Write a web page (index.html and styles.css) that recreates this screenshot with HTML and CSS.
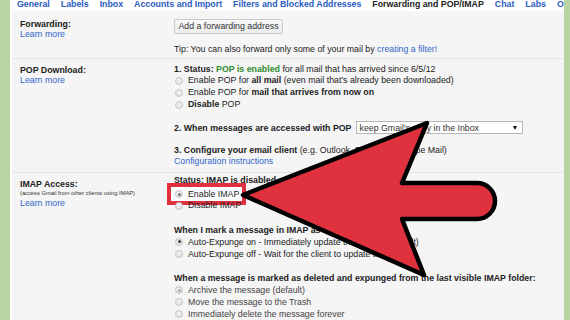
FILE: index.html
```html
<!DOCTYPE html>
<html>
<head>
<meta charset="utf-8">
<link rel="stylesheet" href="styles.css">
</head>
<body>
<div class="frame">
  <div class="strip"></div>
  <div class="page">
    <nav class="tabs">
      <a class="tab">General</a>
      <a class="tab">Labels</a>
      <a class="tab">Inbox</a>
      <a class="tab">Accounts and Import</a>
      <a class="tab">Filters and Blocked Addresses</a>
      <a class="tab active">Forwarding and POP/IMAP</a>
      <a class="tab">Chat</a>
      <a class="tab">Labs</a>
      <a class="tab">Offline</a>
    </nav>
    <div class="content">
      <section class="row fwd">
        <div class="label"><b>Forwarding:</b><a class="link">Learn more</a></div>
        <div class="body">
          <div class="btn">Add a forwarding address</div>
          <div class="tip">Tip: You can also forward only some of your mail by <a class="link">creating a filter!</a></div>
        </div>
      </section>
      <section class="row pop">
        <div class="label"><b>POP Download:</b><a class="link">Learn more</a></div>
        <div class="body">
          <div class="line"><b>1. Status: <span class="green">POP is enabled</span></b> for all mail that has arrived since 6/5/12</div>
          <div class="line opt"><span class="radio"></span><span>Enable POP for <b>all mail</b> (even mail that's already been downloaded)</span></div>
          <div class="line opt"><span class="radio"></span><span>Enable POP for <b>mail that arrives from now on</b></span></div>
          <div class="line opt"><span class="radio"></span><span><b>Disable</b> POP</span></div>
          <div class="selrow"><b>2. When messages are accessed with POP</b><div class="select"><span>keep Gmail's copy in the Inbox</span><span class="caret"></span></div></div>
          <div class="line cfg"><b>3. Configure your email client</b> (e.g. Outlook, Eudora, Netscape Mail)</div>
          <div class="line"><a class="link">Configuration instructions</a></div>
        </div>
      </section>
      <section class="row imap">
        <div class="label"><b>IMAP Access:</b><span class="small">(access Gmail from other clients using IMAP)</span><a class="link">Learn more</a></div>
        <div class="body">
          <div class="line2"><b>Status: IMAP is disabled</b></div>
          <div class="line2 tall"><span class="hl"><span class="radio on"></span><span>Enable IMAP</span></span></div>
          <div class="line2 tall opt"><span class="radio"></span><span>Disable IMAP</span></div>
          <div class="line2 head"><b>When I mark a message in IMAP as deleted:</b></div>
          <div class="line2 opt"><span class="radio on dark"></span><span>Auto-Expunge on - Immediately update the server. (default)</span></div>
          <div class="line2 opt"><span class="radio"></span><span>Auto-Expunge off - Wait for the client to update the server.</span></div>
          <div class="line2 head2"><b>When a message is marked as deleted and expunged from the last visible IMAP folder:</b></div>
          <div class="line2 opt dim"><span class="radio on light"></span><span>Archive the message (default)</span></div>
          <div class="line2 opt dim"><span class="radio"></span><span>Move the message to the Trash</span></div>
          <div class="line2 opt dim"><span class="radio"></span><span>Immediately delete the message forever</span></div>
        </div>
      </section>
    </div>
  </div>
  <div class="strip right"></div>
  <svg class="arrow" width="570" height="320" viewBox="0 0 570 320">
    <path d="M243 195 L427 123 L402 183 L477 183 A18 18 0 0 1 477 219 L402 219 L424 275 Z" fill="#e0313f" stroke="#000" stroke-width="4.5" stroke-linejoin="round"/>
  </svg>
</div>
</body>
</html>
```
FILE: styles.css
```css
html, body {
  margin: 0;
  padding: 0;
  background: #fff;
}
body {
  font-family: "Liberation Sans", Arial, sans-serif;
  font-size: 8.8px;
  color: #222;
}
.frame {
  position: relative;
  width: 570px;
  height: 320px;
  display: flex;
  overflow: hidden;
}
.strip {
  width: 10px;
  background: #b9d4a1;
  flex: none;
}
.strip.right {
  width: 6px;
}
.page {
  flex: 1;
  min-width: 0;
  padding-left: 2px;
  display: flex;
  flex-direction: column;
  background: #fff;
  overflow: hidden;
}
.tabs {
  height: 12px;
  line-height: 9px;
  padding-left: 5px;
  display: flex;
  gap: 11px;
  white-space: nowrap;
  overflow: hidden;
  background: #fff;
}
.tab {
  font-weight: bold;
  color: #2a5bbf;
  flex: none;
}
.tab.active {
  color: #222;
}
.content {
  flex: 1;
  background: #f5f5f5;
}
.row {
  display: grid;
  grid-template-columns: 162px 1fr;
  border-bottom: 1px solid #e4e4e4;
}
.label {
  padding-left: 8px;
  line-height: 10px;
  display: flex;
  flex-direction: column;
  align-items: flex-start;
}
.link {
  color: #3366cc;
}
.fwd {
  padding: 8px 0 3px;
}
.btn {
  width: 109px;
  height: 15px;
  box-sizing: border-box;
  border: 1px solid #c8c8c8;
  border-radius: 2px;
  background: linear-gradient(#f8f8f8, #ececec);
  line-height: 13px;
  text-align: center;
  color: #333;
}
.tip {
  margin-top: 9px;
  line-height: 12px;
}
.pop {
  padding: 5px 0 4px;
}
.pop .label {
  padding-top: 1px;
}
.line {
  line-height: 11.7px;
  white-space: nowrap;
}
.opt {
  display: flex;
  align-items: center;
}
.green {
  color: #2e8b2e;
}
.radio {
  width: 8px;
  height: 8px;
  box-sizing: border-box;
  border-radius: 50%;
  border: 1px solid #c6c6c6;
  background: radial-gradient(circle at 50% 40%, #f4f4f4, #dadada);
  margin: 0 5px 0 1px;
  flex: none;
  display: flex;
  align-items: center;
  justify-content: center;
}
.radio.on::after {
  content: "";
  width: 3px;
  height: 3px;
  border-radius: 50%;
  background: #777;
}
.radio.dark::after {
  background: #444;
}
.radio.light::after {
  background: #aaa;
}
.selrow {
  margin-top: 10px;
  height: 14px;
  display: flex;
  align-items: center;
  white-space: nowrap;
}
.select {
  margin-left: 4px;
  width: 167px;
  height: 13px;
  box-sizing: border-box;
  border: 1px solid #b5b5b5;
  background: #fff;
  display: flex;
  align-items: center;
  justify-content: space-between;
  padding: 0 5px 0 3px;
  color: #333;
}
.caret {
  width: 0;
  height: 0;
  border-left: 2.5px solid transparent;
  border-right: 2.5px solid transparent;
  border-top: 4px solid #111;
}
.cfg {
  margin-top: 10px;
}
.imap {
  padding: 1.5px 0 0;
  border-bottom: none;
}
.imap .label {
  padding-top: 4.5px;
}
.small {
  font-size: 5.75px;
  line-height: 9px;
  white-space: nowrap;
  color: #333;
}
.line2 {
  line-height: 12px;
  height: 12px;
  white-space: nowrap;
}
.line2.tall {
  height: 13px;
  line-height: 13px;
}
.head {
  margin-top: 11.3px;
}
.head2 {
  margin-top: 12.3px;
}
.dim {
  color: #444;
}
.hl {
  display: inline-flex;
  align-items: center;
  height: 14px;
  margin-top: 1px;
  margin-left: -3px;
  padding: 0 3px;
  background: #fff;
  box-shadow: 0 0 0 4px #e0313f;
  vertical-align: top;
}
.arrow {
  position: absolute;
  left: 0;
  top: 0;
  pointer-events: none;
}
```
